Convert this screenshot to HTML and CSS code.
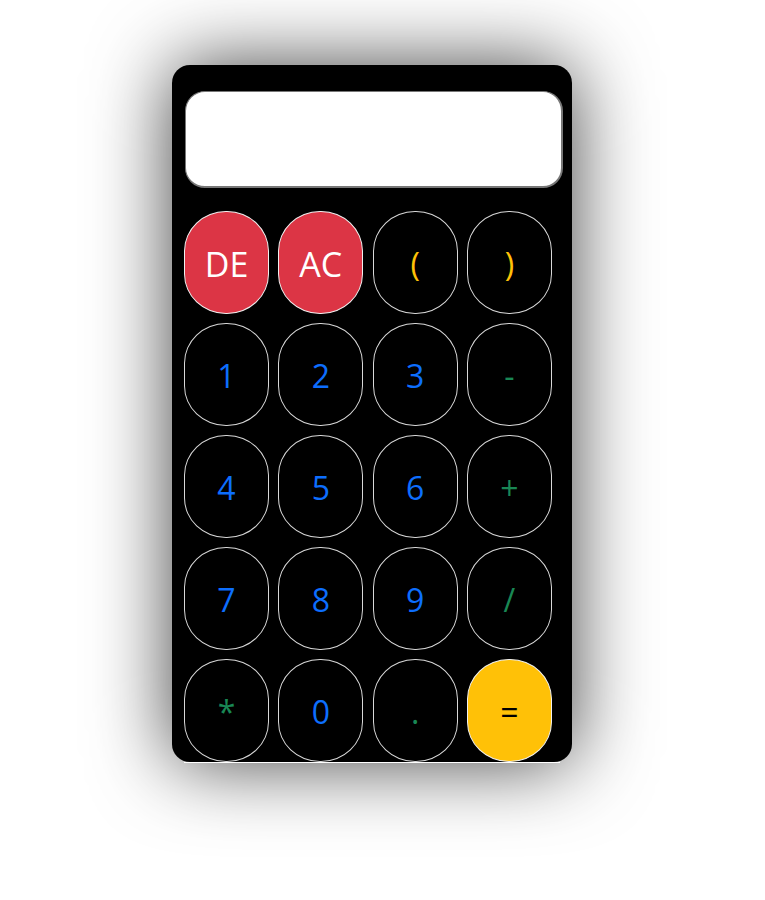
FILE: index.html
```html
<!DOCTYPE html>
<html>
<head>
<meta charset="utf-8">
<link rel="stylesheet" href="styles.css">
</head>
<body>
<div class="calc">
  <input class="display" type="text">
  <div class="keys">
    <button class="key danger">DE</button>
    <button class="key danger">AC</button>
    <button class="key paren">(</button>
    <button class="key paren">)</button>
    <button class="key num">1</button>
    <button class="key num">2</button>
    <button class="key num">3</button>
    <button class="key op">-</button>
    <button class="key num">4</button>
    <button class="key num">5</button>
    <button class="key num">6</button>
    <button class="key op">+</button>
    <button class="key num">7</button>
    <button class="key num">8</button>
    <button class="key num">9</button>
    <button class="key op">/</button>
    <button class="key op">*</button>
    <button class="key num">0</button>
    <button class="key op">.</button>
    <button class="key equal">=</button>
  </div>
  <div class="line"></div>
</div>
</body>
</html>
```
FILE: styles.css
```css
html, body {
  margin: 0;
  padding: 0;
}
body {
  height: 100vh;
  overflow: hidden;
  background: #fff;
  font-family: "Open Sans", "Noto Sans", sans-serif;
}
.calc {
  box-sizing: border-box;
  width: 400px;
  height: 697px;
  margin: 65px 0 0 172px;
  padding: 26px 9px 0 13px;
  background: #000;
  border-radius: 18px;
  box-shadow: 0 0 80px rgba(0, 0, 0, 0.75);
}
.display {
  display: block;
  box-sizing: border-box;
  width: 378px;
  height: 97px;
  margin: 0;
  border: 1px solid #777;
  border-bottom-width: 2px;
  border-right-width: 2px;
  border-radius: 20px;
  background: #fff;
  outline: none;
}
.keys {
  display: grid;
  grid-template-columns: repeat(4, 85px);
  grid-auto-rows: 103px;
  column-gap: 9.3px;
  row-gap: 9px;
  margin: 23px 0 0 -1px;
}
.key {
  box-sizing: border-box;
  margin: 0;
  padding: 2px 0 0;
  border: 1px solid #d8d8d8;
  border-radius: 42px / 40px;
  background: #000;
  font-family: "Open Sans", "Noto Sans", sans-serif;
  font-size: 32px;
  line-height: 1;
  color: #0d6efd;
}
.danger {
  background: #dc3545;
  border-color: #f0f0f0;
  color: #fff;
  font-size: 34px;
}
.paren {
  color: #ffc107;
}
.num {
  color: #0d6efd;
}
.op {
  color: #198754;
}
.equal {
  background: #ffc107;
  border-color: #f0f0f0;
  color: #000;
}
.line {
  width: 376px;
  height: 1px;
  margin-left: -1px;
  background: #fff;
}
```
